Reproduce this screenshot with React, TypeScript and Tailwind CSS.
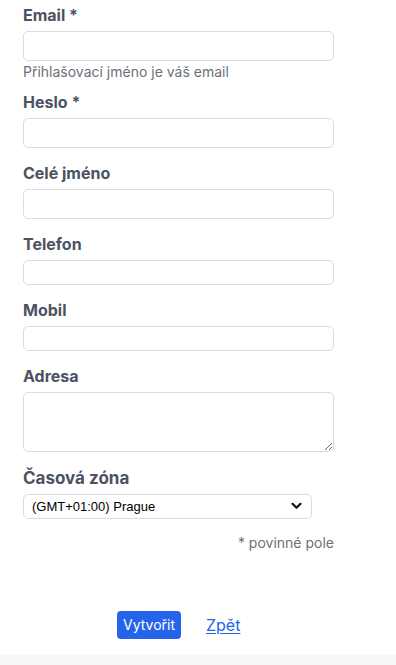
import React from 'react';

const labelCls = 'block text-base leading-6 font-bold text-[#4b5261] mb-1';
const inputCls = 'block w-[311px] rounded-[5px] border border-[#d9dbe0] bg-white px-2 text-sm text-gray-900 outline-none';

function Field({ label, h, mt }: { label: string; h: string; mt: string }) {
  return (
    <div className={mt}>
      <label className={labelCls}>{label}</label>
      <input type="text" className={`${inputCls} ${h}`} />
    </div>
  );
}

export default function App() {
  return (
    <div className="min-h-screen bg-white" style={{ fontFamily: 'Inter, "Noto Sans", sans-serif' }}>
      <div className="mx-4 bg-white px-[7px] pt-[3px] pb-4">
        {/* Email */}
        <div>
          <label className={labelCls}>Email *</label>
          <input type="email" className={`${inputCls} h-[30px]`} />
          <p className="mt-[1px] text-sm leading-5 text-[#6b7079]">Přihlašovací jméno je váš email</p>
        </div>

        <Field label="Heslo *" h="h-[30px]" mt="mt-[8px]" />
        <Field label="Celé jméno" h="h-[30px]" mt="mt-[13px]" />
        <Field label="Telefon" h="h-[25px]" mt="mt-[13px]" />
        <Field label="Mobil" h="h-[25px]" mt="mt-[13px]" />

        <div className="mt-[13px]">
          <label className={labelCls}>Adresa</label>
          <textarea className={`${inputCls} h-[60px] resize-y py-1`} />
        </div>

        <div className="mt-[14px]">
          <label className={`${labelCls} text-[17px]`}>Časová zóna</label>
          <div className="relative w-[289px]">
            <select
              defaultValue="prague"
              className="block h-[25px] w-full appearance-none rounded-[5px] border border-[#d9dbe0] bg-white pl-2 pr-6 text-[13px] text-black outline-none"
              style={{ fontFamily: '"Liberation Sans", Arial, sans-serif' }}
            >
              <option value="london">(GMT+00:00) London</option>
              <option value="prague">(GMT+01:00) Prague</option>
              <option value="athens">(GMT+02:00) Athens</option>
            </select>
            <svg className="pointer-events-none absolute right-[10px] top-[8px]" width="11" height="8" viewBox="0 0 11 8" fill="none">
              <path d="M1.5 1.8 5.5 5.8 9.5 1.8" stroke="#111" strokeWidth="2.2" strokeLinecap="round" strokeLinejoin="round" />
            </svg>
          </div>
        </div>

        <p className="mt-[14px] w-[311px] text-right text-sm leading-5 text-[#6b7079]">* povinné pole</p>

        <div className="mt-[58px] flex items-center gap-[25px] pl-[94px]">
          <button className="h-[28px] w-[64px] rounded-[4px] bg-[#2563eb] text-sm text-white">Vytvořit</button>
          <a href="#" className="text-base leading-6 text-[#2563eb] underline underline-offset-2">Zpět</a>
        </div>
      </div>
      <div className="h-[40px] bg-[#f8f8f9]" />
    </div>
  );
}
